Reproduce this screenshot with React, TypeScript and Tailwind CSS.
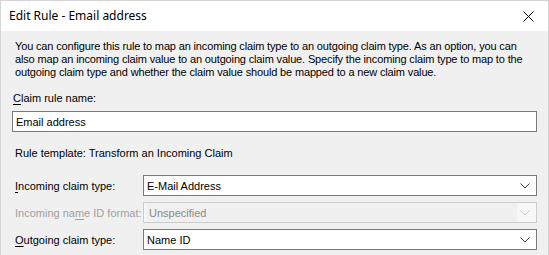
import { ReactNode } from "react";

const font = { fontFamily: '"Liberation Sans", Arial, sans-serif' };

function Chevron({ disabled }: { disabled?: boolean }) {
    return (
        <svg width="10" height="6" viewBox="0 0 10 6" className="shrink-0">
            <path d="M0.5 0.5 L5 5 L9.5 0.5" fill="none" stroke={disabled ? "#c8c8c8" : "#404040"} strokeWidth="1" />
        </svg>
    );
}

function Combo({ value, disabled }: { value: string; disabled?: boolean }) {
    return (
        <div
            className={`flex h-[21px] flex-1 items-center border ${disabled ? "border-[#cccccc] bg-[#f7f7f7]" : "border-[#7a7a7a] bg-white"}`}
        >
            <div className={`flex h-full flex-1 items-center pl-[3px] ${disabled ? "m-[2px] mr-0 h-[15px] bg-[#f0f0f0] text-[#8a8a8a]" : "text-black"}`}>
                {value}
            </div>
            <div className="flex w-[19px] items-center justify-center pr-[3px]">
                <Chevron disabled={disabled} />
            </div>
        </div>
    );
}

function Row({ label, children, disabled }: { label: ReactNode; children: ReactNode; disabled?: boolean }) {
    return (
        <div className="flex items-center">
            <div className={`w-[131px] pl-[3px] ${disabled ? "text-[#a0a0a0]" : "text-black"}`}>{label}</div>
            {children}
        </div>
    );
}

export default function App() {
    return (
        <div style={font} className="h-[255px] w-[549px] overflow-hidden border border-b-0 border-[#d4d4d4] bg-[#f0f0f0] text-[11px] leading-[16px]">
            {/* Title bar */}
            <div className="flex h-[30px] items-center justify-between bg-white pl-[8px] pr-[14px]">
                <span style={{ fontFamily: '"Noto Sans", "Liberation Sans", sans-serif' }} className="text-[12px] text-black">
                    Edit Rule - Email address
                </span>
                <svg width="11" height="11" viewBox="0 0 11 11">
                    <path d="M0.5 0.5 L10.5 10.5 M10.5 0.5 L0.5 10.5" stroke="#000" strokeWidth="1" />
                </svg>
            </div>

            <div className="px-[11px] pt-[9px]">
                <p className="whitespace-nowrap pl-[3px] leading-[13px] tracking-[-0.15px] text-black">
                    You can configure this rule to map an incoming claim type to an outgoing claim type. As an option, you can
                    <br />
                    also map an incoming claim value to an outgoing claim value. Specify the incoming claim type to map to the
                    <br />
                    outgoing claim type and whether the claim value should be mapped to a new claim value.
                </p>

                <div className="mt-[11px] pl-[1px] text-black">
                    <span className="underline underline-offset-2">C</span>laim rule name:
                </div>
                <div className="mt-[5px] flex h-[21px] items-center border border-[#7a7a7a] bg-white pl-[3px] text-black">
                    Email address
                </div>

                <div className="mt-[13px] pl-[3px] text-black">Rule template: Transform an Incoming Claim</div>

                <div className="mt-[14px] flex flex-col gap-[6px]">
                    <Row label={<><span className="underline underline-offset-2">I</span>ncoming claim type:</>}>
                        <Combo value="E-Mail Address" />
                    </Row>
                    <Row disabled label={<>Incoming na<span className="underline underline-offset-2">m</span>e ID format:</>}>
                        <Combo value="Unspecified" disabled />
                    </Row>
                    <Row label={<><span className="underline underline-offset-2">O</span>utgoing claim type:</>}>
                        <Combo value="Name ID" />
                    </Row>
                </div>
            </div>
        </div>
    );
}
